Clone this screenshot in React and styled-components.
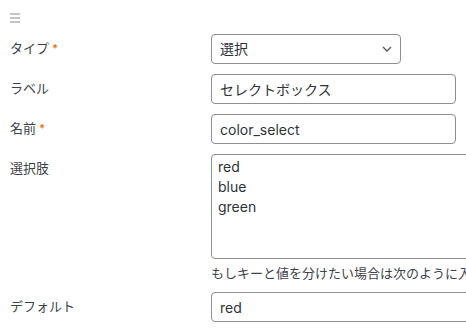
import React from "react";
import styled, { createGlobalStyle } from "styled-components";

const Global = createGlobalStyle`
  html, body { margin: 0; padding: 0; background: #fff; overflow: hidden; }
  body { font-family: Inter, "Noto Sans CJK JP", sans-serif; }
`;

const Page = styled.div`
  padding: 13px 0 0 10px;
  width: 560px;
`;

const Handle = styled.svg`
  display: block;
  width: 10px;
  height: 10px;
  margin-bottom: 11px;
`;

const Form = styled.div`
  display: grid;
  grid-template-columns: 201px 330px;
  row-gap: 10px;
`;

const Label = styled.div`
  font-size: 13px;
  line-height: 18px;
  padding-top: 5px;
  color: #3c434a;
  display: flex;
  align-items: flex-start;
`;

const Required = styled.span`
  color: #e8741f;
  font-size: 11px;
  line-height: 18px;
  margin-left: 3px;
  font-weight: 700;
`;

const Field = styled.div`
  display: flex;
  flex-direction: column;
`;

const boxBase = `
  box-sizing: border-box;
  border: 1px solid #8c8f94;
  border-radius: 4px;
  background: #fff;
  color: #2c3338;
  font-family: Inter, "Noto Sans CJK JP", sans-serif;
  font-size: 14px;
  outline: none;
  margin: 0;
`;

const Input = styled.input`
  ${boxBase}
  width: ${(p) => p.$w}px;
  height: 30px;
  padding: 0 8px;
  line-height: 28px;
`;

const SelectWrap = styled.div`
  position: relative;
  width: 190px;
`;

const Select = styled.select`
  ${boxBase}
  appearance: none;
  -webkit-appearance: none;
  width: 190px;
  height: 30px;
  padding: 0 24px 0 8px;
  line-height: 28px;
`;

const Chevron = styled.svg`
  position: absolute;
  right: 9px;
  top: 12px;
  width: 10px;
  height: 6px;
  pointer-events: none;
`;

const TextArea = styled.textarea`
  ${boxBase}
  width: 330px;
  height: 105px;
  padding: 2px 6px;
  line-height: 20px;
  resize: none;
  display: block;
`;

const Help = styled.p`
  margin: 5px 0 0;
  font-size: 13px;
  line-height: 18px;
  color: #3c434a;
  white-space: nowrap;
`;

export default function App() {
  return (
    <>
      <Global />
      <Page>
        <Handle viewBox="0 0 10 10">
          <rect x="0" y="0" width="10" height="2" fill="#c3c4c7" />
          <rect x="0" y="4" width="10" height="2" fill="#c3c4c7" />
          <rect x="0" y="8" width="10" height="2" fill="#c3c4c7" />
        </Handle>
        <Form>
          <Label>
            タイプ<Required>*</Required>
          </Label>
          <Field>
            <SelectWrap>
              <Select defaultValue="select">
                <option value="select">選択</option>
              </Select>
              <Chevron viewBox="0 0 10 6">
                <path d="M1 1l4 4 4-4" fill="none" stroke="#50575e" strokeWidth="1.3" />
              </Chevron>
            </SelectWrap>
          </Field>

          <Label>ラベル</Label>
          <Field>
            <Input $w={245} defaultValue="セレクトボックス" />
          </Field>

          <Label>
            名前<Required>*</Required>
          </Label>
          <Field>
            <Input $w={245} defaultValue="color_select" />
          </Field>

          <Label>選択肢</Label>
          <Field>
            <TextArea defaultValue={"red\nblue\ngreen"} />
            <Help>もしキーと値を分けたい場合は次のように入力してください。</Help>
          </Field>

          <Label>デフォルト</Label>
          <Field>
            <Input $w={330} defaultValue="red" />
          </Field>
        </Form>
      </Page>
    </>
  );
}
